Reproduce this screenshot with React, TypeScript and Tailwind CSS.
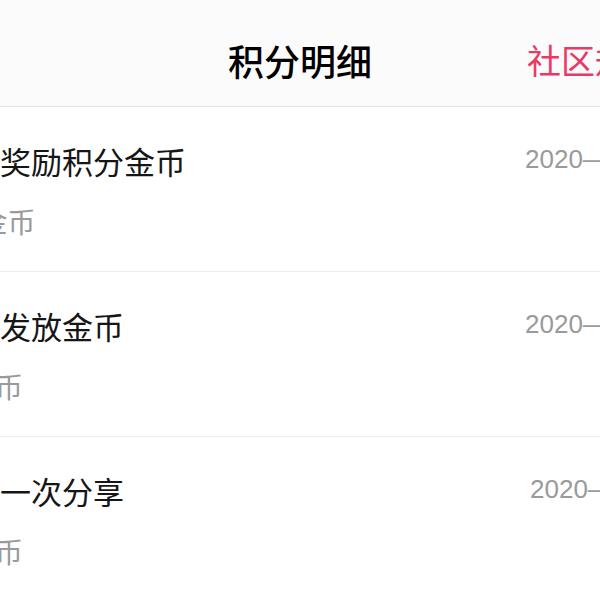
const CJK = "font-['Noto_Sans_CJK_SC','Noto_Sans',sans-serif]";

type Row = { title: string; sub: string; date: string; subShift: string; dateShift: string };

const ROWS: Row[] = [
  { title: "签到奖励积分金币", sub: "+10金币", date: "2020—05—18 10:24", subShift: "ml-[-5px]", dateShift: "" },
  { title: "每日发放金币", sub: "+5金币", date: "2020—05—18 09:12", subShift: "ml-[-2px]", dateShift: "" },
  { title: "完成一次分享", sub: "+5金币", date: "2020—05—17 21:45", subShift: "ml-[-2px]", dateShift: "mr-[-5px]" },
];

function PointRow({ row }: { row: Row }) {
  return (
    <div className="h-[165px] border-b border-[#ececec] overflow-hidden">
      <div className="flex items-start justify-between ml-[-62px] mr-[-165px] pt-[38px]">
        <div className="flex flex-col">
          <div className="text-[31px] leading-none text-[#161616] whitespace-nowrap">{row.title}</div>
          <div className={`mt-[31px] text-[28px] leading-none text-[#9a9a9a] whitespace-nowrap ${row.subShift}`}>{row.sub}</div>
        </div>
        <div className={`mt-[1px] font-['Liberation_Sans',sans-serif] text-[26px] leading-none text-[#9a9a9a] whitespace-nowrap ${row.dateShift}`}>
          {row.date}
        </div>
      </div>
    </div>
  );
}

export default function App() {
  return (
    <div className={`w-[600px] h-[600px] overflow-hidden bg-white ${CJK}`}>
      <div className="h-[107px] bg-[#fbfbfb] border-b border-[#e2e2e2] grid grid-cols-[1fr_auto_1fr] items-center pt-[14px]">
        <div />
        <h1 className="text-[36px] leading-none font-medium text-black whitespace-nowrap">积分明细</h1>
        <div className="overflow-hidden">
          <span className="block ml-[155px] text-[34px] leading-none text-[#e93a66] whitespace-nowrap">社区规则</span>
        </div>
      </div>
      {ROWS.map((r) => (
        <PointRow key={r.title} row={r} />
      ))}
    </div>
  );
}
